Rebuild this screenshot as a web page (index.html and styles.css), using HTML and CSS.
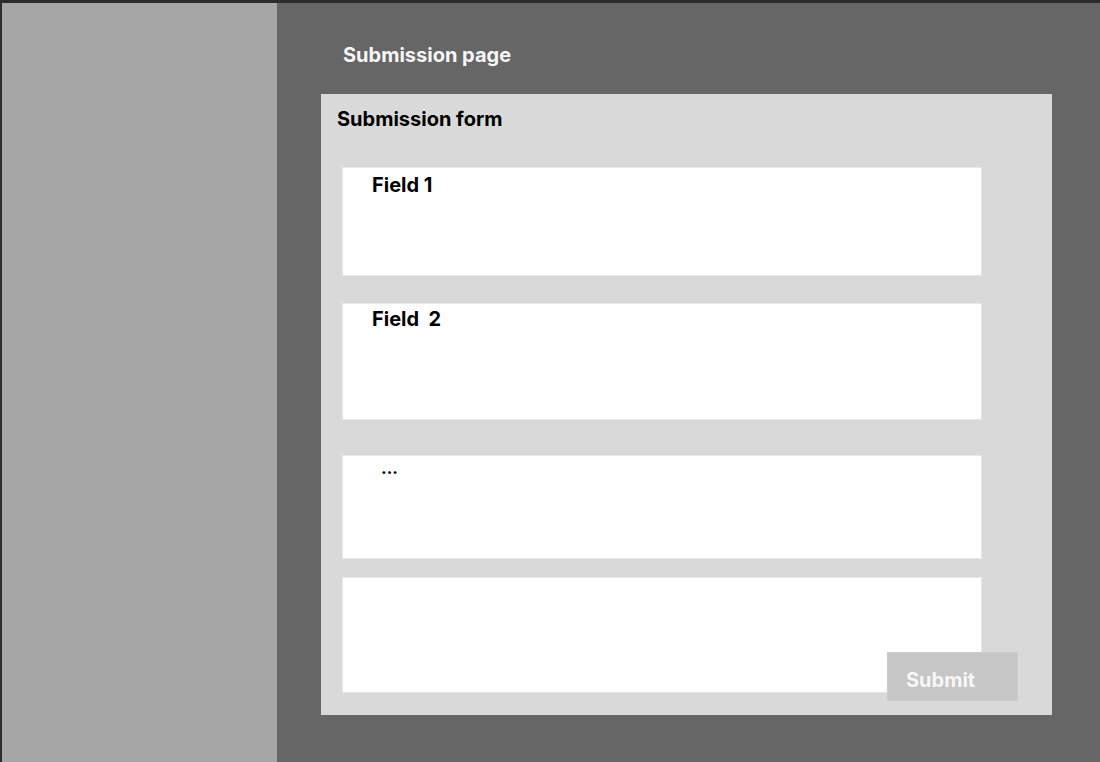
FILE: index.html
```html
<!DOCTYPE html>
<html lang="en">
<head>
<meta charset="utf-8">
<title>Submission page</title>
<link rel="stylesheet" href="styles.css">
</head>
<body>
<div class="frame">
  <aside class="sidebar"></aside>
  <main class="main">
    <h1 class="page-title">Submission page</h1>
    <section class="panel">
      <h2 class="panel-title">Submission form</h2>
      <div class="field field-1"><span class="field-label">Field 1</span></div>
      <div class="field field-2"><span class="field-label">Field&nbsp; 2</span></div>
      <div class="field field-3"><span class="field-label field-dots">...</span></div>
      <div class="field field-4"></div>
      <button class="submit" type="button">Submit</button>
    </section>
  </main>
</div>
</body>
</html>
```
FILE: styles.css
```css
* { box-sizing: border-box; }
html, body {
  margin: 0;
  padding: 0;
  width: 1100px;
  height: 762px;
  overflow: hidden;
  background: #666666;
  font-family: Inter, "Liberation Sans", sans-serif;
}
.frame {
  display: flex;
  width: 1100px;
  height: 762px;
  border-top: 3px solid #2c2c2c;
  border-left: 2px solid #2c2c2c;
}
.sidebar {
  flex: 0 0 275px;
  background: #a6a6a6;
}
.main {
  flex: 1;
  background: #666666;
  padding: 40px 0 0 44px;
  display: flex;
  flex-direction: column;
  align-items: flex-start;
}
.page-title {
  margin: 0 0 27px 22px;
  font-size: 20px;
  line-height: 24px;
  font-weight: 700;
  color: #f7f7f7;
}
.panel {
  position: relative;
  width: 731px;
  background: #d9d9d9;
  padding: 13px 0 22px 0;
  display: flex;
  flex-direction: column;
}
.panel-title {
  margin: 0 0 36px 16px;
  font-size: 20px;
  line-height: 24px;
  font-weight: 700;
  color: #000;
}
.field {
  margin-left: 21px;
  width: 640px;
  background: #ffffff;
  border: 1px solid #e6e6e6;
  padding: 5px 0 0 29px;
}
.field-1 { height: 109px; margin-bottom: 27px; }
.field-2 { height: 117px; margin-bottom: 35px; padding-top: 3px; }
.field-3 { height: 104px; margin-bottom: 18px; padding-top: 0; padding-left: 38px; }
.field-4 { height: 116px; }
.field-label {
  display: block;
  font-size: 20px;
  line-height: 24px;
  font-weight: 700;
  color: #000;
}
.field-dots {
  font-size: 17px;
}
.submit {
  position: absolute;
  left: 566px;
  top: 558px;
  width: 131px;
  height: 49px;
  margin: 0;
  border: 1px solid #cccccc;
  background: #c6c6c6;
  color: #f7f7f7;
  font-family: Inter, "Liberation Sans", sans-serif;
  font-size: 20px;
  line-height: 24px;
  font-weight: 700;
  text-align: left;
  padding: 6px 0 0 18px;
  display: block;
}
```
